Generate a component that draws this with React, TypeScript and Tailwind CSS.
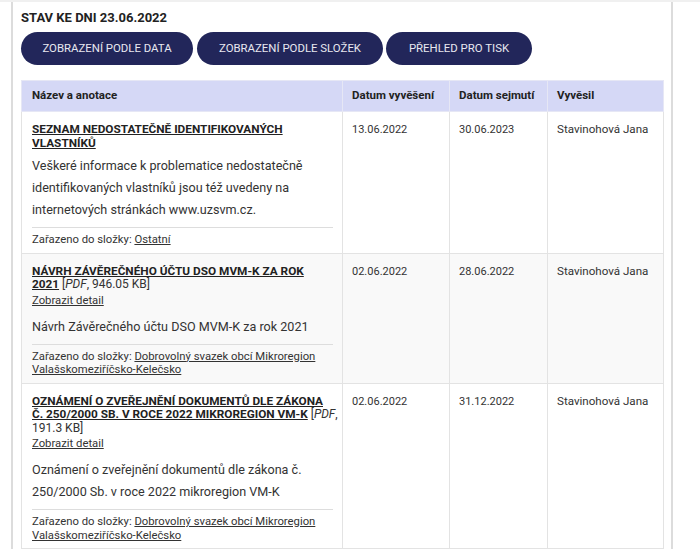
import React from "react";

const font = { fontFamily: 'Roboto, "Liberation Sans", sans-serif' };

type Row = {
  title: React.ReactNode;
  detail?: boolean;
  text: React.ReactNode;
  folder: React.ReactNode;
  from: string;
  to: string;
  bg: string;
};

const linkCls = "font-bold uppercase underline text-[#222]";

const rows: Row[] = [
  {
    title: (
      <>
        <a className={linkCls}>Seznam nedostatečně identifikovaných</a>
        <br />
        <a className={linkCls}>vlastníků</a>
      </>
    ),
    text: "Veškeré informace k problematice nedostatečně identifikovaných vlastníků jsou též uvedeny na internetových stránkách www.uzsvm.cz.",
    folder: <a className="underline">Ostatní</a>,
    from: "13.06.2022",
    to: "30.06.2023",
    bg: "bg-white",
  },
  {
    title: (
      <>
        <a className={linkCls}>Návrh Závěrečného účtu DSO MVM-K za rok</a>
        <br />
        <a className={linkCls}>2021</a>{" "}
        <span className="text-[12px] font-normal">[<i>PDF</i>, 946.05 KB]</span>
      </>
    ),
    detail: true,
    text: "Návrh Závěrečného účtu DSO MVM-K za rok 2021",
    folder: <a className="underline">Dobrovolný svazek obcí Mikroregion Valašskomeziříčsko-Kelečsko</a>,
    from: "02.06.2022",
    to: "28.06.2022",
    bg: "bg-[#f9f9f9]",
  },
  {
    title: (
      <>
        <a className={linkCls}>Oznámení o zveřejnění dokumentů dle zákona</a>
        <br />
        <a className={linkCls}>č. 250/2000 Sb. v roce 2022 mikroregion VM-K</a>{" "}
        <span className="text-[12px] font-normal">
          [<i>PDF</i>,
          <br />
          191.3 KB]
        </span>
      </>
    ),
    detail: true,
    text: "Oznámení o zveřejnění dokumentů dle zákona č. 250/2000 Sb. v roce 2022 mikroregion VM-K",
    folder: <a className="underline">Dobrovolný svazek obcí Mikroregion Valašskomeziříčsko-Kelečsko</a>,
    from: "02.06.2022",
    to: "31.12.2022",
    bg: "bg-white",
  },
];

export default function App() {
  return (
    <div className="h-[549px] w-[700px] overflow-hidden bg-white text-[#333]" style={font}>
      <div className="h-[2px] w-full bg-[#f0f0f0]" />
      <div className="ml-[11px] w-[662px] border-x-2 border-[#dcdcdc] px-[8px] pt-[8px] min-h-[547px]">
        <h2 className="text-[13px] font-bold leading-[15px] text-[#222]">STAV KE DNI 23.06.2022</h2>
        <div className="mt-[7px] flex gap-[3px]">
          <button className="h-[33px] w-[172px] rounded-full bg-[#22265a] text-[11.4px] text-[#e8e8f0] uppercase">Zobrazení podle data</button>
          <button className="ml-[1px] h-[33px] w-[186px] rounded-full bg-[#22265a] text-[11.4px] text-[#e8e8f0] uppercase">Zobrazení podle složek</button>
          <button className="h-[33px] w-[146px] rounded-full bg-[#22265a] text-[11.4px] text-[#e8e8f0] uppercase">Přehled pro tisk</button>
        </div>
        <table className="mt-[15px] w-[642px] table-fixed border-collapse text-[11.3px]">
          <colgroup>
            <col className="w-[321px]" />
            <col className="w-[107px]" />
            <col className="w-[98px]" />
            <col className="w-[116px]" />
          </colgroup>
          <thead>
            <tr className="h-[31px] bg-[#d5d8f6] text-left text-[#222]">
              <th className="border border-[#e6e7f5] px-[10px] text-[11.5px] font-bold whitespace-nowrap">Název a anotace</th>
              <th className="border border-[#e6e7f5] px-[9px] text-[11.5px] font-bold whitespace-nowrap">Datum vyvěšení</th>
              <th className="border border-[#e6e7f5] px-[9px] text-[11.5px] font-bold whitespace-nowrap">Datum sejmutí</th>
              <th className="border border-[#e6e7f5] px-[9px] text-[11.5px] font-bold whitespace-nowrap">Vyvěsil</th>
            </tr>
          </thead>
          <tbody>
            {rows.map((r, i) => (
              <tr key={i} className={r.bg}>
                <td className="border border-[#e3e3e3] pl-[10px] pr-[9px] pt-[11px] pb-[6px] align-top">
                  <div className="whitespace-nowrap text-[11.8px] leading-[13.5px]">{r.title}</div>
                  {r.detail && (
                    <div className="mt-[2px] leading-[14px]">
                      <a className="underline">Zobrazit detail</a>
                    </div>
                  )}
                  <p className={`${r.detail ? "mt-[8px]" : "mt-[5px]"} text-[12.6px] leading-[22px]`}>{r.text}</p>
                  <div className="mt-[6px] border-t border-[#dddddd] pt-[5px] leading-[13.5px]">
                    Zařazeno do složky: {r.folder}
                  </div>
                </td>
                <td className="border border-[#e3e3e3] px-[9px] pt-[11px] align-top text-[11px] leading-[13.5px]">{r.from}</td>
                <td className="border border-[#e3e3e3] px-[9px] pt-[11px] align-top text-[11px] leading-[13.5px]">{r.to}</td>
                <td className="border border-[#e3e3e3] px-[9px] pt-[11px] align-top text-[11.6px] leading-[13.5px]">Stavinohová Jana</td>
              </tr>
            ))}
          </tbody>
        </table>
      </div>
    </div>
  );
}
